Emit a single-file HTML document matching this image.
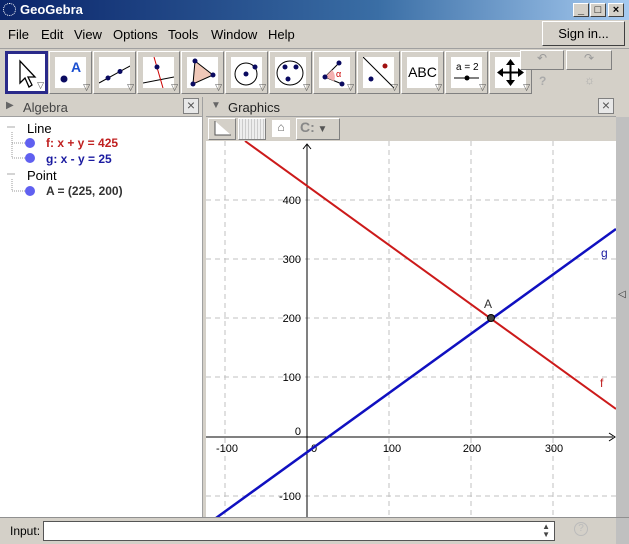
<!DOCTYPE html>
<html><head><meta charset="utf-8"><style>
*{margin:0;padding:0;box-sizing:border-box}
body{width:629px;height:544px;background:#d4d0c8;font-family:"Liberation Sans",Arial,sans-serif;position:relative;overflow:hidden;font-size:12px}
.abs{position:absolute}
#title{left:0;top:0;width:629px;height:20px;background:linear-gradient(90deg,#0a246a,#3a6ea5 60%,#a6caf0);color:#fff;font-weight:bold;font-size:13px}
.wb{top:3px;width:16px;height:14px;background:#d4d0c8;border:1px solid;border-color:#fff #404040 #404040 #fff;color:#000;font-size:11px;text-align:center;line-height:12px;font-weight:bold}
#menu span{position:absolute;top:27px;font-size:13px;color:#000}
.tb{top:51px;width:43px;height:43px;background:#d4d0c8;border:1px solid;border-color:#fff #808080 #808080 #fff}
.tb .in{position:absolute;left:5px;top:5px;width:31px;height:31px;background:#fff}
.tri{position:absolute;right:1px;bottom:0px;font-size:9px;color:#555}
.hdr{top:97px;height:20px;background:#d4d0c8;border-bottom:1px solid #a0a0a0;font-size:13px;color:#444}
.xb{position:absolute;top:1px;width:16px;height:16px;border:1px solid #808080;background:#e8e8e8;font-size:14px;line-height:13px;text-align:center;color:#555}
.gb{top:118px;height:22px;background:#d4d0c8;border:1px solid;border-color:#fff #808080 #808080 #fff}
</style></head><body>
<div id="title" class="abs"><span class="abs" style="left:3px;top:3px;width:13px;height:13px;border:1px dotted #fff;border-radius:50%"></span><span class="abs" style="left:20px;top:2px">GeoGebra</span>
<div class="abs wb" style="left:573px">_</div><div class="abs wb" style="left:590px">□</div><div class="abs wb" style="left:608px">×</div></div>
<div id="menu"><span style="left:8px">File</span><span style="left:41px">Edit</span><span style="left:74px">View</span><span style="left:113px">Options</span><span style="left:168px">Tools</span><span style="left:211px">Window</span><span style="left:268px">Help</span></div>
<div class="abs" style="left:542px;top:21px;width:83px;height:25px;border:1px solid;border-color:#fff #404040 #404040 #fff;font-size:13px;text-align:center;line-height:23px">Sign in...</div>
<div class="abs" style="left:0;top:48px;width:629px;height:1px;background:#a0a0a0"></div>
<div class="abs tb" style="left:5px;border:3px solid #2a2a8a;background:#fff"><svg class="abs" style="left:8px;top:5px" width="24" height="30"><path d="M4 2 L4 24 L9 19 L13 28 L16 26 L12 18 L19 18 Z" fill="#fff" stroke="#000" stroke-width="1.3"/></svg><span class="tri">▽</span></div>
<div class="abs tb" style="left:49px"><div class="in"><svg width="31" height="31"><circle cx="9" cy="22" r="3.5" fill="#0a0a60"/><text x="16" y="15" font-size="14" font-weight="bold" fill="#1a4fd0" font-family="Liberation Sans">A</text></svg></div><span class="tri">▽</span></div>
<div class="abs tb" style="left:93px"><div class="in"><svg width="31" height="31"><line x1="0" y1="26" x2="31" y2="9" stroke="#000"/><circle cx="9" cy="21" r="2.5" fill="#0a0a60"/><circle cx="21" cy="14.5" r="2.5" fill="#0a0a60"/></svg></div><span class="tri">▽</span></div>
<div class="abs tb" style="left:137px"><div class="in"><svg width="31" height="31"><line x1="0" y1="26" x2="31" y2="20" stroke="#000"/><line x1="11" y1="0" x2="20" y2="31" stroke="#c00"/><circle cx="14" cy="10" r="2.5" fill="#0a0a60"/></svg></div><span class="tri">▽</span></div>
<div class="abs tb" style="left:181px"><div class="in"><svg width="31" height="31"><polygon points="8,4 26,18 6,27" fill="#f0c8b8" stroke="#000"/><circle cx="8" cy="4" r="2.5" fill="#0a0a60"/><circle cx="26" cy="18" r="2.5" fill="#0a0a60"/><circle cx="6" cy="27" r="2.5" fill="#0a0a60"/></svg></div><span class="tri">▽</span></div>
<div class="abs tb" style="left:225px"><div class="in"><svg width="31" height="31"><circle cx="15" cy="17" r="11" fill="none" stroke="#000"/><circle cx="15" cy="17" r="2.5" fill="#0a0a60"/><circle cx="24" cy="10" r="2.5" fill="#0a0a60"/></svg></div><span class="tri">▽</span></div>
<div class="abs tb" style="left:269px"><div class="in"><svg width="31" height="31"><ellipse cx="15" cy="16" rx="13" ry="12" fill="none" stroke="#000"/><circle cx="10" cy="10" r="2.5" fill="#0a0a60"/><circle cx="21" cy="10" r="2.5" fill="#0a0a60"/><circle cx="13" cy="22" r="2.5" fill="#0a0a60"/></svg></div><span class="tri">▽</span></div>
<div class="abs tb" style="left:313px"><div class="in"><svg width="31" height="31"><path d="M6 20 L20 6 M6 20 L23 27" stroke="#000" fill="none"/><path d="M6 20 L13 13 A10 10 0 0 1 15 24 Z" fill="#f4b0b0"/><text x="17" y="20" font-size="9" fill="#c00">α</text><circle cx="6" cy="20" r="2.5" fill="#0a0a60"/><circle cx="20" cy="6" r="2.5" fill="#0a0a60"/><circle cx="23" cy="27" r="2.5" fill="#0a0a60"/></svg></div><span class="tri">▽</span></div>
<div class="abs tb" style="left:357px"><div class="in"><svg width="31" height="31"><line x1="0" y1="0" x2="31" y2="31" stroke="#000"/><circle cx="22" cy="9" r="2.5" fill="#a01010"/><circle cx="8" cy="22" r="2.5" fill="#0a0a60"/></svg></div><span class="tri">▽</span></div>
<div class="abs tb" style="left:401px"><div class="in" style="font-size:14px;line-height:31px;text-align:center;color:#000">ABC</div><span class="tri">▽</span></div>
<div class="abs tb" style="left:445px"><div class="in"><svg width="31" height="31"><text x="5" y="13" font-size="10" font-family="Liberation Sans">a = 2</text><line x1="3" y1="21" x2="28" y2="21" stroke="#000"/><circle cx="16" cy="21" r="2.5" fill="#000"/></svg></div><span class="tri">▽</span></div>
<div class="abs tb" style="left:489px"><div class="in"><svg width="31" height="31"><path d="M15.5 4 V27 M4 15.5 H27" stroke="#000" stroke-width="2"/><path d="M15.5 2 L11 8 H20Z M15.5 29 L11 23 H20Z M2 15.5 L8 11 V20Z M29 15.5 L23 11 V20Z" fill="#000"/></svg></div><span class="tri">▽</span></div>
<div class="abs" style="left:520px;top:50px;width:44px;height:20px;border:1px solid;border-color:#fff #808080 #808080 #fff;background:#d4d0c8;color:#999;text-align:center">↶</div>
<div class="abs" style="left:566px;top:50px;width:46px;height:20px;border:1px solid;border-color:#fff #808080 #808080 #fff;background:#d4d0c8;color:#999;text-align:center">↷</div>
<span class="abs" style="left:539px;top:74px;color:#aaa;font-weight:bold">?</span><span class="abs" style="left:584px;top:73px;color:#aaa">☼</span>
<div class="abs hdr" style="left:0;width:202px"><span class="abs" style="left:6px;top:3px;font-size:10px;color:#666">▶</span><span class="abs" style="left:23px;top:3px">Algebra</span><div class="xb" style="left:183px">×</div></div>
<div class="abs" style="left:202px;top:97px;width:4px;height:421px;background:#d4d0c8;border-left:1px solid #a0a0a0"></div>
<div class="abs hdr" style="left:206px;width:410px"><span class="abs" style="left:5px;top:3px;font-size:10px;color:#666">▼</span><span class="abs" style="left:22px;top:3px;color:#222">Graphics</span><div class="xb" style="left:392px">×</div></div>
<div class="abs gb" style="left:208px;width:28px"><svg width="26" height="20"><path d="M6 2 V16 H22" stroke="#555" fill="#fff"/></svg></div>
<div class="abs gb" style="left:238px;width:28px;background:repeating-linear-gradient(90deg,#ccc 0 1px,#eee 1px 3px)"></div>
<div class="abs" style="left:272px;top:120px;width:18px;height:17px;background:#fff;color:#666;text-align:center;font-size:12px">⌂</div>
<div class="abs gb" style="left:296px;width:44px;font-weight:bold;color:#888;font-size:14px;padding-left:3px">C:<span style="font-size:10px;color:#555"> ▼</span></div>
<div class="abs" style="left:0;top:117px;width:202px;height:401px;background:#fff;font-size:12px">
<svg class="abs" style="left:0;top:0" width="202" height="90"><g stroke="#999" stroke-dasharray="1,1" fill="none"><path d="M12 15 V41 H25 M12 26 H25 M12 62 V74 H25"/></g><rect x="5" y="6" width="12" height="8" fill="#fff"/><line x1="7" y1="10" x2="15" y2="10" stroke="#aaa"/><rect x="5" y="53" width="12" height="8" fill="#fff"/><line x1="7" y1="57" x2="15" y2="57" stroke="#aaa"/><circle cx="30" cy="26" r="5" fill="#6060f0"/><circle cx="30" cy="41" r="5" fill="#6060f0"/><circle cx="30" cy="74" r="5" fill="#6060f0"/></svg>
<span class="abs" style="left:27px;top:4px;font-size:13px">Line</span>
<span class="abs" style="left:46px;top:19px;color:#c02020;font-weight:bold">f: x + y = 425</span>
<span class="abs" style="left:46px;top:35px;color:#1a1aa0;font-weight:bold">g: x - y = 25</span>
<span class="abs" style="left:27px;top:51px;font-size:13px">Point</span>
<span class="abs" style="left:46px;top:67px;color:#333;font-weight:bold">A = (225, 200)</span>
</div>
<svg class="abs" style="left:206px;top:141px" width="410" height="377" font-family="Liberation Sans" font-size="11">
<rect width="410" height="377" fill="#fff"/>
<g stroke="#c0c0c0" stroke-dasharray="5,4"><line x1="19" y1="0" x2="19" y2="377"/><line x1="183" y1="0" x2="183" y2="377"/><line x1="265" y1="0" x2="265" y2="377"/><line x1="347" y1="0" x2="347" y2="377"/>
<line x1="0" y1="59" x2="410" y2="59"/><line x1="0" y1="118" x2="410" y2="118"/><line x1="0" y1="177" x2="410" y2="177"/><line x1="0" y1="236" x2="410" y2="236"/><line x1="0" y1="355" x2="410" y2="355"/></g>
<line x1="101" y1="3" x2="101" y2="377" stroke="#000"/><path d="M97 8 L101 3 L105 8" stroke="#000" fill="none"/>
<line x1="0" y1="296" x2="407" y2="296" stroke="#000"/><path d="M403 292 L409 296 L403 300" stroke="#000" fill="none"/>
<g fill="#000" text-anchor="end"><text x="95" y="63">400</text><text x="95" y="122">300</text><text x="95" y="181">200</text><text x="95" y="240">100</text><text x="95" y="294">0</text><text x="95" y="359">-100</text></g>
<g fill="#000" text-anchor="middle"><text x="21" y="311">-100</text><text x="186" y="311">100</text><text x="266" y="311">200</text><text x="348" y="311">300</text><text x="108" y="311">0</text></g>
<line x1="39" y1="0" x2="410" y2="268" stroke="#cc1a1a" stroke-width="2"/>
<line x1="10" y1="377" x2="410" y2="88" stroke="#1010c0" stroke-width="2.5"/>
<circle cx="285" cy="177" r="3.5" fill="#444" stroke="#000"/>
<text x="278" y="167" fill="#333" font-size="12">A</text>
<text x="395" y="116" fill="#1a1aa0" font-size="12">g</text>
<text x="394" y="246" fill="#c02020" font-size="12">f</text>
</svg>
<div class="abs" style="left:616px;top:117px;width:13px;height:401px;background:#c0c0c0"><span class="abs" style="left:2px;top:172px;font-size:10px;color:#333">◁</span></div>
<div class="abs" style="left:0;top:517px;width:629px;height:1px;background:#909090"></div>
<span class="abs" style="left:10px;top:524px;font-size:12px">Input:</span>
<div class="abs" style="left:43px;top:521px;width:512px;height:20px;background:#fff;border:1px solid #555"><span class="abs" style="right:4px;top:1px;font-size:8px;line-height:8px;color:#444">▲<br>▼</span></div>
<span class="abs" style="left:574px;top:522px;width:14px;height:14px;border:1px solid #bbb;border-radius:50%;color:#bbb;font-size:10px;text-align:center;line-height:12px">?</span>
<div class="abs" style="left:616px;top:518px;width:13px;height:26px;background:#c0c0c0"></div>
</body></html>
